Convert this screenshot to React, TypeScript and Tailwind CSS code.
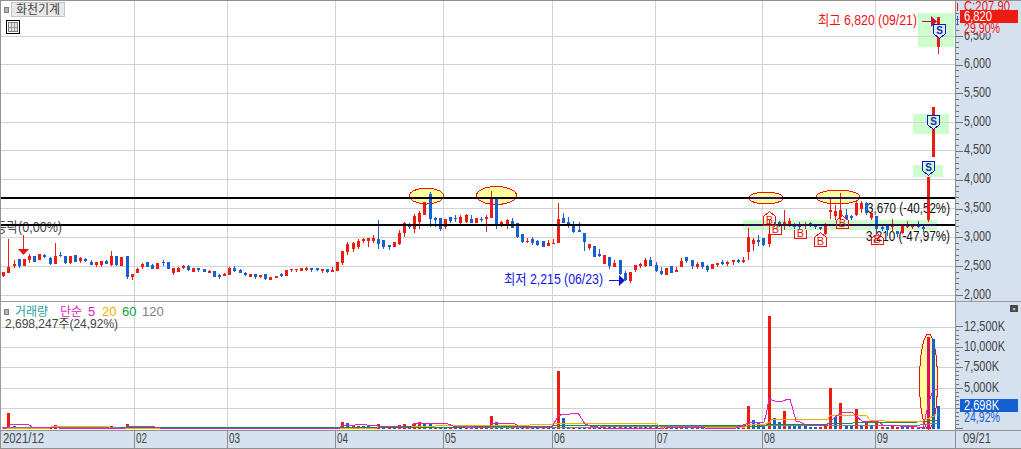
import type { ReactNode } from "react";

// candle rows: colour, body top, body bottom, wick top, wick bottom (in crop units, 3 per px)
const rowsA = `r 305 318 305 320|r 292 308 207 308|r 282 288 270 293|b 267 288 267 293|r 267 288 267 288|r 258 271 253 278|b 258 275 258 275|r 252 269 252 269|b 255 260 252 263|b 264 282 262 285|r 258 282 220 282|b 255 258 246 261|b 258 278 258 281|r 258 279 258 282|b 255 275 255 275|r 264 273 261 278|b 267 273 264 277|b 275 284 270 284|r 277 286 277 290|r 274 286 274 291|b 273 282 270 282|r 258 285 243 288|b 258 285 258 288|r 261 288 261 288|b 258 320 258 327|r 312 322 312 330|r 297 308 294 309|r 282 291 279 296|b 276 290 276 290|b 286 297 283 297|r 279 297 279 297|b 276 279 270 288|b 276 297 276 297|r 294 309 294 315|r 294 306 291 306|r 288 294 285 297|b 288 299 285 303|r 294 305 294 305|b 294 301 294 305|b 296 305 296 305|r 302 308 299 308|b 303 321 303 321|b 315 320 312 327|r 312 318 309 318|r 294 315 291 315|b 294 303 288 306|b 300 309 297 309|b 309 315 306 318|r 312 320 312 320|b 312 321 312 327|r 315 321 315 324|b 312 326 312 330|r 321 330 321 330|r 318 324 318 324|b 312 318 309 321|r 300 318 300 318|r 298 301 296 306|r 297 300 297 306|r 294 302 294 302|r 293 299 291 303|b 294 300 294 305|b 294 300 294 303|r 297 302 297 309|b 297 305 297 309|r 300 305 291 305|r 276 303 276 303|r 243 279 243 285|r 222 246 216 255|r 219 237 216 246|r 213 230 207 237`;
const rowsB = `r 208 214 205 218|r 203 214 203 230|r 205 214 195 218|b 208 222 150 236|b 211 232 211 236|b 226 232 226 240|r 215 231 215 231|r 189 222 180 224|r 160 190 157 200|b 164 172 160 176|r 138 176 133 188|r 128 156 124 176|r 96 136 96 136|b 72 147 66 170|b 144 150 140 170|b 144 176 144 184|r 148 172 148 176|b 142 152 142 160|b 144 148 134 155|r 140 160 134 163|r 136 156 133 160|b 148 158 136 160|r 144 160 144 160|b 146 149 140 155|r 140 148 136 185|r 84 143 64 143|b 84 162 84 176|r 156 163 153 172|r 150 163 146 178|b 154 173 144 175|b 160 202 160 205|b 193 215 193 218|r 212 214 204 220|b 206 218 200 224|b 214 224 210 227|b 212 230 212 230|r 220 227 210 228|r 218 220 208 221|r 148 218 98 218|b 144 158 128 160|b 156 163 142 175|b 165 187 153 190|b 181 185 156 185|b 190 215 190 242|r 222 235 222 240|b 228 260 228 260|b 252 258 238 260|r 256 283 256 283|b 262 288 262 298|r 280 291 270 291|b 270 312 270 316|b 309 330 303 333|r 306 334 306 338|r 286 300 286 305|r 282 288 279 294|r 270 288 264 291|b 270 288 262 288|b 286 302 276 305`;
const rowsC = `b 153 161 141 165|r 144 164 144 164|b 138 159 138 159|r 150 156 141 156|r 123 141 114 141|b 111 123 111 129|b 120 138 120 147|r 132 141 126 147|b 126 141 126 147|b 138 150 135 156|r 132 147 132 147|r 129 135 129 141|b 126 132 120 135|r 126 132 123 138|r 120 126 120 135|b 120 126 117 129|r 120 126 111 129|r 51 96 24 120|r 60 72 54 93|b 60 66 45 78`;
const rowsD = `b 265 285 265 288|r 252 282 210 290|b 222 228 216 232|b 215 225 212 230|r 215 225 180 240|r 212 225 205 232|b 222 232 218 238|b 224 230 216 236|r 224 228 216 236|b 220 228 216 232|b 225 232 222 236|b 230 238 230 240|r 225 252 220 255|r 180 187 140 207|r 183 198 165 210|r 180 200 130 210|b 195 207 178 210|b 198 205 195 210|r 160 195 150 198|r 160 178 152 188|b 160 190 156 195|r 190 205 187 210|b 198 238 198 252|b 230 238 228 242|b 228 240 228 258|r 228 232 208 245|b 242 252 242 260|r 226 250 226 252|r 226 230 212 235|r 226 232 226 238|b 225 230 213 235|b 230 237 228 245`;

const RED = "#ec1c10";
const BLUE = "#1860d0";
const GRID = "#d2d2d2";
const AXIS = "#d6e1ef";
const INK = "#444444";

type Candle = { red: boolean; top: number; bottom: number; high: number; low: number };

function parseRows(rows: string, base: number): Candle[] {
  return rows.split("|").map((row) => {
    const [c, bt, bb, wt, wb] = row.split(" ");
    const y = (v: string) => Math.round(base + Number(v) / 3);
    return { red: c === "r", top: y(bt), bottom: y(bb), high: y(wt), low: y(wb) };
  });
}

const candles: Candle[] = [
  ...parseRows(rowsA, 170),
  ...parseRows(rowsB, 170),
  ...parseRows(rowsC, 220),
  ...parseRows(rowsD, 150),
  { red: true, top: 177, bottom: 220, high: 177, low: 222 },
  { red: true, top: 107, bottom: 157, high: 107, low: 157 },
  { red: true, top: 17, bottom: 47, high: 17, low: 54 },
];

const candleX = (i: number) => Math.round(3.3 + 5.136 * i);

// index -> [height, colour] for the volume bars that rise above the floor
const volumeBars: Record<number, [number, string]> = {
  1: [16, RED], 2: [3, BLUE], 10: [4, RED], 21: [3, RED], 24: [5, RED],
  66: [7, RED], 67: [6, BLUE], 68: [4, RED], 69: [3, RED], 70: [3, BLUE], 71: [4, BLUE],
  73: [5, RED], 77: [4, RED], 78: [5, RED], 80: [6, RED], 81: [7, RED], 82: [6, BLUE], 83: [6, BLUE],
  95: [13, RED], 96: [7, BLUE], 108: [58, RED], 109: [11, BLUE],
  145: [23, RED], 146: [9, BLUE], 147: [7, BLUE], 149: [113, RED], 150: [11, BLUE], 151: [7, BLUE], 152: [18, RED],
  153: [5, BLUE], 154: [3, BLUE], 155: [3, BLUE], 156: [3, BLUE], 160: [4, RED], 161: [41, RED], 162: [12, BLUE],
  163: [26, RED], 164: [4, BLUE], 165: [3, BLUE], 166: [20, RED], 167: [4, BLUE], 168: [7, RED], 169: [3, BLUE],
  170: [7, RED], 173: [4, RED], 180: [92, "#e01060"], 181: [90, BLUE], 182: [23, BLUE],
};

const monthLines = [134, 227, 335, 443, 552, 655, 762, 875];
const priceGrid = [36, 64, 93, 122, 150, 179, 208, 237, 266, 295];
const volumeGrid = [327, 347, 367, 388, 408];

const priceLabels = [
  ["6,000", 64], ["5,500", 93], ["5,000", 122], ["4,500", 150], ["4,000", 179],
  ["3,500", 208], ["3,000", 237], ["2,500", 266], ["2,000", 295],
] as const;
const volumeLabels = [
  ["12,500K", 327, 41], ["10,000K", 347, 41], ["7,500K", 367, 35], ["5,000K", 388, 35],
] as const;
const months = [
  ["2021/12", 3, 41], ["02", 136, 11], ["03", 229, 11], ["04", 337, 11], ["05", 445, 11],
  ["06", 554, 11], ["07", 657, 11], ["08", 764, 11], ["09", 877, 11],
] as const;

const lineMagenta = "3,429 8,427 11,424 28,424 32,427 60,428 125,428 127,426 150,426 160,428 340,428 342,425 355,425 356,424 366,424 367,425 372,425 378,426 412,426 413,424 418,423 443,423 448,424 453,426 468,426 473,427 490,427 491,424 496,423 510,423 515,424 520,427 552,427 558,416 563,414 570,414 573,413 578,413 585,424 590,426 606,428 664,428 665,427 705,428 736,428 746,424 752,422 764,422 766,415 769,399 775,401 783,401 788,399 790,399 796,421 800,422 807,426 827,425 835,417 843,412 848,412 853,413 863,422 877,421 883,425 917,427 923,428 928,405 933,390 938,389";
const lineOrange = "2,428 50,428 52,426 108,426 110,428 377,428 378,426 436,426 437,425 530,425 553,424 556,423 656,423 658,425 660,427 745,427 748,425 765,424 770,422 772,419 828,419 830,415 866,415 870,420 885,421 917,421 923,421 938,414";
const lineGreen = "120,428 470,427 473,426 553,426 556,425 736,425 745,425 748,426 765,426 768,424 827,424 830,423 853,423 855,422 917,422 938,420";
const lineGray = "2,427 600,427 760,426 767,425 920,425 938,423";

function Label(props: { x: number; y: number; w?: number; color?: string; size?: number; children: ReactNode }) {
  const { x, y, w, color = INK, size = 14, children } = props;
  return (
    <text x={x} y={y + 5} fontSize={size} fill={color} textLength={w} lengthAdjust="spacingAndGlyphs">
      {children}
    </text>
  );
}

function SellMark({ x, top, fill }: { x: number; top: number; fill: string }) {
  return (
    <g>
      <path d={`M${x + 0.5} ${top + 0.5}h12v9l-6 5-6-5z`} fill={fill} stroke="#1414d8" shapeRendering="crispEdges" />
      <text x={x + 6.5} y={top + 10} textAnchor="middle" fontSize={10} fontWeight={700} fill="#2020c0">S</text>
    </g>
  );
}

function BuyMark({ x, top, bottom, open }: { x: number; top: number; bottom: number; open?: boolean }) {
  const d = open
    ? `M${x + 0.5} ${top}V${bottom + 0.5}h12V${top}`
    : `M${x + 0.5} ${bottom + 0.5}V${top + 5.5}l6-5 6 5V${bottom + 0.5}z`;
  return (
    <g>
      <path d={d} fill="none" stroke="#f01010" shapeRendering="crispEdges" />
      <text x={x + 6.5} y={bottom - 1} textAnchor="middle" fontSize={11} fill="#f01010">B</text>
    </g>
  );
}

function PriceChart() {
  return (
    <svg width={954} height={300} viewBox="1 1 954 300" className="block">
      <rect x={743} y={220} width={194} height={10} fill="#ccffcc" />
      <rect x={918} y={13} width={36} height={34} fill="#ccffcc" />
      <rect x={913} y={114} width={36} height={20} fill="#ccffcc" />
      <rect x={913} y={165} width={30} height={12} fill="#ccffcc" />
      {priceGrid.map((y) => <rect key={y} x={1} y={y} width={954} height={1} fill={GRID} />)}
      {monthLines.map((x) => <rect key={x} x={x} y={1} width={1} height={300} fill={GRID} />)}

      <ellipse cx={426.5} cy={196} rx={17} ry={8} fill="#fdfd9c" stroke="#f01010" shapeRendering="crispEdges" />
      <ellipse cx={496.5} cy={195.5} rx={20} ry={9} fill="#fdfd9c" stroke="#f01010" shapeRendering="crispEdges" />
      <ellipse cx={766} cy={198} rx={17} ry={6} fill="#fdfd9c" stroke="#f01010" shapeRendering="crispEdges" />
      <ellipse cx={838} cy={197} rx={22} ry={7} fill="#fdfd9c" stroke="#f01010" shapeRendering="crispEdges" />

      <Label x={-5} y={227} w={67}>등락(0,00%)</Label>
      <Label x={867} y={208} w={83} color="#111">3,670 (-40,52%)</Label>
      <Label x={866} y={236} w={84} color="#111">3,210 (-47,97%)</Label>

      {candles.map((c, i) => {
        const x = candleX(i);
        const color = c.red ? RED : BLUE;
        return (
          <g key={i} fill={color}>
            <rect x={x} y={c.high} width={1} height={c.low - c.high} />
            <rect x={x - 1} y={c.top} width={3} height={Math.max(c.bottom - c.top, 1)} />
          </g>
        );
      })}
      <rect x={490} y={198} width={3} height={7} fill="#e0106a" />

      <rect x={1} y={197} width={954} height={2} fill="#000" />
      <rect x={1} y={224} width={954} height={2} fill="#000" />
      <rect x={750} y={197} width={32} height={2} fill="#14146e" />
      <rect x={817} y={197} width={42} height={2} fill="#14146e" />
      <rect x={744} y={224} width={192} height={2} fill="#2c0c48" />

      <rect x={23} y={235} width={1} height={14} fill="#e02020" />
      <path d="M18 249h11l-5.500 6z" fill="#e01818" />

      <Label x={818} y={20} w={99} color="#f01010">최고 6,820 (09/21)</Label>
      <rect x={922} y={21} width={10} height={1} fill="#c01040" />
      <path d="M931 16l6 5.500-6 5.500z" fill="#c01040" />
      <Label x={504} y={279} w={99} color="#1414e0">최저 2,215 (06/23)</Label>
      <rect x={609} y={280} width={10} height={1} fill="#1414e0" />
      <path d="M619 275l6 5.500-6 5.500z" fill="#1414e0" />

      <SellMark x={933} top={24} fill="#dff3ee" />
      <SellMark x={927} top={115} fill="#ccffcc" />
      <SellMark x={922} top={161} fill="#ccffcc" />

      <BuyMark x={763} top={211} bottom={225} />
      <BuyMark x={769} top={226} bottom={234} open />
      <BuyMark x={794} top={230} bottom={238} open />
      <BuyMark x={814} top={232} bottom={246} />
      <BuyMark x={836} top={215} bottom={228} />
      <BuyMark x={871} top={233} bottom={244} />
    </svg>
  );
}

function VolumeChart() {
  return (
    <svg width={954} height={128} viewBox="1 302 954 128" className="block">
      {volumeGrid.map((y) => <rect key={y} x={1} y={y} width={954} height={1} fill={GRID} />)}
      {monthLines.map((x) => <rect key={x} x={x} y={302} width={1} height={128} fill={GRID} />)}
      <ellipse cx={928.5} cy={381.5} rx={9} ry={47.5} fill="#fdfd9c" stroke="#f01010" shapeRendering="crispEdges" />
      {candles.map((_, i) => {
        const bar = volumeBars[i];
        const color = bar ? bar[1] : (i * 7) % 3 === 0 ? RED : BLUE;
        const height = bar ? bar[0] : 2;
        return <rect key={i} x={candleX(i) - 1} y={429 - height} width={3} height={height} fill={color} />;
      })}
      <g fill="none" shapeRendering="crispEdges">
        <polyline points={lineGray} stroke="#808080" />
        <polyline points={lineGreen} stroke="#109040" />
        <polyline points={lineOrange} stroke="#f0b000" />
        <polyline points={lineMagenta} stroke="#e020c0" />
      </g>
    </svg>
  );
}

function PriceAxis() {
  const ticks = Array.from({ length: 50 }, (_, i) => 295 - i * 5.76).filter((y) => y > 10);
  return (
    <svg width={65} height={300} viewBox="956 1 65 300" className="block">
      {ticks.map((y, i) => (
        <rect key={i} x={956} y={Math.round(y)} width={i % 5 === 0 ? 7 : 3} height={1} fill="#707070" />
      ))}
      {priceLabels.map(([t, y]) => <Label key={t} x={964} y={y - 1} w={27}>{t}</Label>)}
      <Label x={964} y={35} w={27}>6,500</Label>
      <Label x={964} y={6} w={46} color="#f01010">C:207,90</Label>
      <rect x={957} y={3} width={1} height={8} fill="#f01010" />
      <rect x={957} y={16} width={1} height={9} fill="#1860d0" />
      <rect x={960} y={24} width={61} height={9} fill={AXIS} />
      <rect x={960} y={10} width={58} height={13} fill={RED} />
      <Label x={964} y={16} w={28} color="#fff">6,820</Label>
      <Label x={964} y={28} w={36} color="#f01010">29,90%</Label>
    </svg>
  );
}

function VolumeAxis() {
  const ticks = Array.from({ length: 26 }, (_, i) => 408 - i * 4.08 + 20.4).filter((y) => y > 315);
  return (
    <svg width={65} height={128} viewBox="956 302 65 128" className="block">
      {ticks.map((y, i) => (
        <rect key={i} x={956} y={Math.round(y)} width={i % 5 === 0 ? 7 : 3} height={1} fill="#707070" />
      ))}
      {volumeLabels.map(([t, y, w]) => <Label key={t} x={964} y={y - 1} w={w}>{t}</Label>)}
      <rect x={960} y={399} width={58} height={13} fill="#1560d0" />
      <Label x={964} y={405} w={35} color="#fff">2,698K</Label>
      <Label x={964} y={417} w={36} color="#1860d0">24,92%</Label>
    </svg>
  );
}

function DateAxis() {
  return (
    <svg width={1020} height={17} viewBox="1 431 1020 17" className="block">
      {[...monthLines, 955].map((x) => <rect key={x} x={x} y={431} width={1} height={17} fill="#8c8c8c" />)}
      {months.map(([t, x, w]) => <Label key={t} x={x} y={438} w={w}>{t}</Label>)}
      <Label x={963} y={438} w={28}>09/21</Label>
    </svg>
  );
}

export default function App() {
  return (
    <div className="flex h-[449px] w-[1021px] flex-col overflow-hidden border-t border-[#909090] bg-white font-['Liberation_Sans','Noto_Sans_CJK_KR',sans-serif] text-[12px] leading-none text-[#444444]">
      <div className="flex h-[300px] border-l border-[#909090]">
        <div className="relative w-[954px]">
          <PriceChart />
          <div className="absolute left-[3px] top-[1px] flex items-center gap-[2px]">
            <span className="h-[6px] w-[5px] border border-[#808080] bg-[#b4b4b4]" />
            <span className="flex h-[15px] w-[54px] items-center justify-center border border-[#c4c4c4] bg-[#e8e8e8]">화천기계</span>
          </div>
          <div className="absolute left-[5px] top-[19px] flex h-[14px] w-[14px] items-center justify-center border border-black bg-white">
            <div className="grid h-[10px] w-[10px] grid-cols-3 gap-px border border-[#808080] bg-[#9a9a9a]">
              {Array.from({ length: 6 }, (_, i) => <span key={i} className="bg-[#e4e4e4]" />)}
            </div>
          </div>
        </div>
        <div className="w-[66px] border-l border-[#909090] bg-[#d6e1ef]">
          <PriceAxis />
        </div>
      </div>

      <div className="flex h-[129px] border-l border-t border-[#9a9a9a]">
        <div className="relative w-[954px]">
          <VolumeChart />
          <div className="absolute left-[3px] top-[3px] flex items-center whitespace-nowrap">
            <span className="h-[6px] w-[5px] shrink-0 border border-[#808080] bg-[#b4b4b4]" />
            <span className="ml-[6px] w-[36px] shrink-0 text-[#2a9d9d]">거래량</span>
            <span className="ml-[9px] w-[24px] shrink-0 text-[#e020c0]">단순</span>
            <span className="ml-[4px] w-[14px] shrink-0 text-[13px] text-[#e020c0]">5</span>
            <span className="w-[20px] shrink-0 text-[13px] text-[#f0b000]">20</span>
            <span className="w-[20px] shrink-0 text-[13px] text-[#10a040]">60</span>
            <span className="shrink-0 text-[13px] text-[#808080]">120</span>
          </div>
          <div className="absolute left-[4px] top-[16px] whitespace-nowrap text-[12px]">2,698,247주(24,92%)</div>
        </div>
        <div className="relative w-[66px] border-l border-[#909090] bg-[#d6e1ef]">
          <VolumeAxis />
          <span className="absolute left-[54px] top-[3px] flex h-[7px] w-[8px] items-center justify-center bg-[#484848] text-[6px] text-white">×</span>
        </div>
      </div>

      <div className="h-[19px] border-y border-l border-[#909090] bg-[#d6e1ef]">
        <DateAxis />
      </div>
    </div>
  );
}
